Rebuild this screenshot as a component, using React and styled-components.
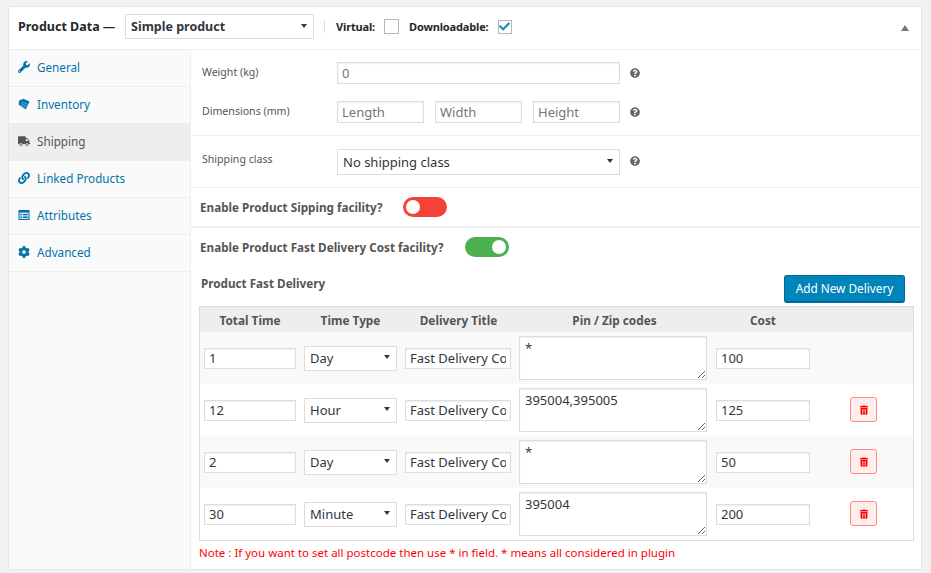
import styled, { createGlobalStyle } from "styled-components"
import { FaWrench, FaTruck, FaLink, FaCog, FaQuestionCircle, FaTrashAlt, FaCheck } from "react-icons/fa"

const GlobalStyle = createGlobalStyle`
  html, body { margin: 0; padding: 0; background: #f1f1f1; }
  body { font-family: "Noto Sans", "Open Sans", sans-serif; color: #555; font-size: 12px; }
  * { box-sizing: border-box; }
`
const Page = styled.div`
  width: 931px;
  height: 573px;
  padding: 6px 9px 3px 8px;
  overflow: hidden;
`
const Panel = styled.div`
  height: 564px;
  background: #fff;
  border: 1px solid #e5e5e5;
`
const Header = styled.div`
  height: 43px;
  display: flex;
  align-items: center;
  padding: 0 12px 3px 9px;
  border-bottom: 1px solid #eee;
  color: #23282d;
  font-weight: 700;
  font-size: 11px;
  letter-spacing: -0.15px;
`
const HeaderTitle = styled.span`
  font-size: 12.5px;
  letter-spacing: 0;
  width: 107px;
  white-space: nowrap;
`
const Separator = styled.span`
  width: 1px;
  height: 13px;
  background: #ddd;
  margin: 0 11px 0 10px;
`
const Check = styled.span`
  width: ${p => p.$w}px;
  height: ${p => p.$w}px;
  margin: 0 10px 0 9px;
  border: 1px solid #b4b9be;
  background: #fff;
  display: flex;
  align-items: center;
  justify-content: center;
  color: #1e8cbe;
  font-size: 11px;
`
const Collapse = styled.span`
  margin: 3px 0 0 auto;
  width: 0;
  height: 0;
  border-left: 4px solid transparent;
  border-right: 4px solid transparent;
  border-bottom: 6px solid #72777c;
`
const Body = styled.div`
  display: flex;
  height: 519px;
`
const Sidebar = styled.ul`
  width: 182px;
  margin: 0;
  padding: 0;
  list-style: none;
  background: #fafafa;
  border-right: 1px solid #eee;
`
const Tab = styled.li`
  height: 37px;
  display: flex;
  align-items: center;
  padding: 0 0 2px 9px;
  gap: 7px;
  border-bottom: 1px solid #eee;
  color: ${p => p.$active ? "#555" : "#0073aa"};
  background: ${p => p.$active ? "#eee" : "transparent"};
  font-size: 11.7px;
  svg { width: 12px; height: 12px; flex: none; }
`
const Content = styled.div`
  flex: 1;
  min-width: 0;
`
const Section = styled.div`
  height: ${p => p.$h}px;
  padding: ${p => p.$pad || "0"};
  border-bottom: ${p => p.$thick ? "2px solid #eee" : "1px solid #eee"};
`
const FieldRow = styled.div`
  display: flex;
  align-items: center;
  height: ${p => p.$h || 22}px;
  margin-bottom: ${p => p.$mb || 0}px;
  padding-left: 11px;
`
const FieldLabel = styled.label`
  width: 135px;
  font-size: 10.6px;
  color: #555;
  padding-bottom: ${p => p.$lift || 0}px;
`
const TextInput = styled.input`
  height: ${p => p.$h || 22}px;
  width: ${p => p.$w}px;
  margin-right: ${p => p.$mr || 0}px;
  border: 1px solid #ddd;
  box-shadow: inset 0 1px 2px rgba(0,0,0,.07);
  padding: 0 4px;
  font: 13px "Noto Sans", sans-serif;
  color: #32373c;
  background: #fff;
  outline: none;
  &::placeholder { color: #72777c; }
`
const SelectWrap = styled.div`
  position: relative;
  width: ${p => p.$w}px;
  height: ${p => p.$h}px;
  &::after {
    content: "";
    position: absolute;
    right: 7px;
    top: calc(50% - 3px);
    border-left: 3px solid transparent;
    border-right: 3px solid transparent;
    border-top: 4px solid #32373c;
  }
`
const Select = styled.select`
  appearance: none;
  width: 100%;
  height: 100%;
  border: 1px solid #ddd;
  padding: 0 5px;
  background: #fff;
  color: #32373c;
  font: ${p => p.$bold ? "700 12.5px" : "13px"} "Noto Sans", sans-serif;
  outline: none;
`
const Help = styled(FaQuestionCircle)`
  color: #666;
  width: 10px;
  height: 10px;
  margin-left: 10px;
  margin-bottom: ${p => p.$lift || 0}px;
`
const ToggleRow = styled.div`
  display: flex;
  align-items: center;
  gap: ${p => p.$gap}px;
  height: 20px;
  padding-left: 9px;
  font-size: 11.7px;
  font-weight: 700;
`
const FastDelivery = styled.div`
  padding-top: 9px;
`
const Toggle = styled.span`
  width: 44px;
  height: 20px;
  border-radius: 10px;
  position: relative;
  background: ${p => p.$on ? "#4caf50" : "#f44336"};
  &::before {
    content: "";
    position: absolute;
    top: 3px;
    left: ${p => p.$on ? "27px" : "3px"};
    width: 14px;
    height: 14px;
    border-radius: 50%;
    background: #fff;
  }
`
const DeliveryHead = styled.div`
  display: flex;
  justify-content: space-between;
  align-items: flex-start;
  padding: 18px 16px 0 10px;
  height: 49px;
  font-size: 11.7px;
  font-weight: 700;
`
const AddButton = styled.button`
  width: 121px;
  height: 28px;
  background: #0085ba;
  border: 1px solid #006799;
  border-bottom-width: 2px;
  border-radius: 3px;
  color: #fff;
  font: 11.8px "Noto Sans", sans-serif;
  padding: 0 0 2px;
`
const TableWrap = styled.div`
  margin: 0 7px 0 8px;
  border: 1px solid #ddd;
  height: 235px;
`
const Table = styled.table`
  width: 100%;
  border-collapse: collapse;
  table-layout: fixed;
  th {
    height: 25px;
    padding: 0;
    background: #eee;
    font-size: 11.8px;
    color: #555;
    text-align: center;
  }
  td { height: 52px; padding: 0; vertical-align: middle; }
  tbody tr:nth-child(odd) { background: #f9f9f9; }
`
const Col = styled.col`
  width: ${p => p.$w ? `${p.$w}px` : "auto"};
`
const CellCenter = styled.div`
  display: flex;
  align-items: center;
  padding-left: ${p => p.$left || 0}px;
`
const Area = styled.textarea`
  display: block;
  width: 188px;
  height: 44px;
  border: 1px solid #ddd;
  box-shadow: inset 0 1px 2px rgba(0,0,0,.07);
  padding: 2px 5px;
  font: 13px "Noto Sans", sans-serif;
  color: #32373c;
  background: #fff;
  outline: none;
`
const Trash = styled.button`
  width: 27px;
  height: 25px;
  padding: 0;
  margin: 0 0 1px 37px;
  background: #ffeeee;
  border: 1px solid #ff8a8a;
  border-radius: 3px;
  color: #f00;
  display: flex;
  align-items: center;
  justify-content: center;
  svg { width: 8px; height: 10px; }
`
const Note = styled.p`
  margin: 4px 0 0 8px;
  color: #f00;
  font-size: 11.5px;
  white-space: nowrap;
`

const TagIcon = () => (
  <svg viewBox="0 0 12 12">
    <path d="M5.5 .8 11.5 3.6 7.8 11.4 .6 6.6 1.2 2.6Z" fill="#0073aa" />
    <path d="M4 3.6 9.6 6.4M3.2 5.3 8.8 8.1M2.6 6.8 7.8 9.6" stroke="#6db3d1" strokeWidth=".8" />
  </svg>
)

const AttributesIcon = () => (
  <svg viewBox="0 0 12 12">
    <path d="M.5 1H11.5V11H.5Z" fill="#0073aa" />
    <path d="M1.5 3.5H10.5V10H1.5Z" fill="#cfe5ef" />
    <path d="M2.5 5H4V6.3H2.5ZM2.5 7.6H4V8.9H2.5ZM5 5H9.5V6.3H5ZM5 7.6H9.5V8.9H5Z" fill="#0073aa" />
  </svg>
)

const tabs = [
  { label: "General", Icon: FaWrench },
  { label: "Inventory", Icon: TagIcon },
  { label: "Shipping", Icon: FaTruck, active: true },
  { label: "Linked Products", Icon: FaLink },
  { label: "Attributes", Icon: AttributesIcon },
  { label: "Advanced", Icon: FaCog },
]

const rows = [
  { time: "1", type: "Day", zip: "*", cost: "100" },
  { time: "12", type: "Hour", zip: "395004,395005", cost: "125", del: true },
  { time: "2", type: "Day", zip: "*", cost: "50", del: true },
  { time: "30", type: "Minute", zip: "395004", cost: "200", del: true },
]

export default function App() {
  return (
    <Page>
      <GlobalStyle />
      <Panel>
        <Header>
          <HeaderTitle>Product Data —</HeaderTitle>
          <SelectWrap $w={189} $h={25}>
            <Select $bold defaultValue="simple"><option value="simple">Simple product</option></Select>
          </SelectWrap>
          <Separator />
          <span>Virtual:</span>
          <Check $w={15} />
          <span>Downloadable:</span>
          <Check $w={14}><FaCheck /></Check>
          <Collapse />
        </Header>
        <Body>
          <Sidebar>
            {tabs.map(({ label, Icon, active }) => (
              <Tab key={label} $active={active}><Icon />{label}</Tab>
            ))}
          </Sidebar>
          <Content>
            <Section $h={86} $pad="12px 0 0">
              <FieldRow $mb={17}>
                <FieldLabel $lift={2}>Weight (kg)</FieldLabel>
                <TextInput $w={283} placeholder="0" />
                <Help />
              </FieldRow>
              <FieldRow>
                <FieldLabel $lift={2}>Dimensions (mm)</FieldLabel>
                <TextInput $w={87} $mr={11} placeholder="Length" />
                <TextInput $w={87} $mr={11} placeholder="Width" />
                <TextInput $w={87} placeholder="Height" />
                <Help />
              </FieldRow>
            </Section>
            <Section $h={52} $pad="13px 0 0">
              <FieldRow $h={26}>
                <FieldLabel $lift={6}>Shipping class</FieldLabel>
                <SelectWrap $w={283} $h={26}>
                  <Select defaultValue="none"><option value="none">No shipping class</option></Select>
                </SelectWrap>
                <Help $lift={3} />
              </FieldRow>
            </Section>
            <Section $h={40} $pad="9px 0 0" $thick>
              <ToggleRow $gap={20}>
                <span>Enable Product Sipping facility?</span>
                <Toggle />
              </ToggleRow>
            </Section>
            <FastDelivery>
              <ToggleRow $gap={21}>
                <span>Enable Product Fast Delivery Cost facility?</span>
                <Toggle $on />
              </ToggleRow>
              <DeliveryHead>
                <span>Product Fast Delivery</span>
                <AddButton>Add New Delivery</AddButton>
              </DeliveryHead>
            </FastDelivery>
            <TableWrap>
              <Table>
                <colgroup>
                  <Col $w={100} />
                  <Col $w={101} />
                  <Col $w={115} />
                  <Col $w={197} />
                  <Col $w={100} />
                  <Col />
                </colgroup>
                <thead>
                  <tr>
                    <th>Total Time</th>
                    <th>Time Type</th>
                    <th>Delivery Title</th>
                    <th>Pin / Zip codes</th>
                    <th>Cost</th>
                    <th></th>
                  </tr>
                </thead>
                <tbody>
                  {rows.map((r, i) => (
                    <tr key={i}>
                      <td><CellCenter $left={4}><TextInput $w={92} $h={21} defaultValue={r.time} /></CellCenter></td>
                      <td>
                        <CellCenter $left={4}>
                          <SelectWrap $w={93} $h={25}>
                            <Select defaultValue={r.type}><option>{r.type}</option></Select>
                          </SelectWrap>
                        </CellCenter>
                      </td>
                      <td><CellCenter $left={4}><TextInput $w={106} $h={21} defaultValue="Fast Delivery Cost" /></CellCenter></td>
                      <td><CellCenter $left={3}><Area defaultValue={r.zip} /></CellCenter></td>
                      <td><CellCenter $left={3}><TextInput $w={94} $h={21} defaultValue={r.cost} /></CellCenter></td>
                      <td>{r.del && <Trash><FaTrashAlt /></Trash>}</td>
                    </tr>
                  ))}
                </tbody>
              </Table>
            </TableWrap>
            <Note>Note : If you want to set all postcode then use * in field. * means all considered in plugin</Note>
          </Content>
        </Body>
      </Panel>
    </Page>
  )
}
